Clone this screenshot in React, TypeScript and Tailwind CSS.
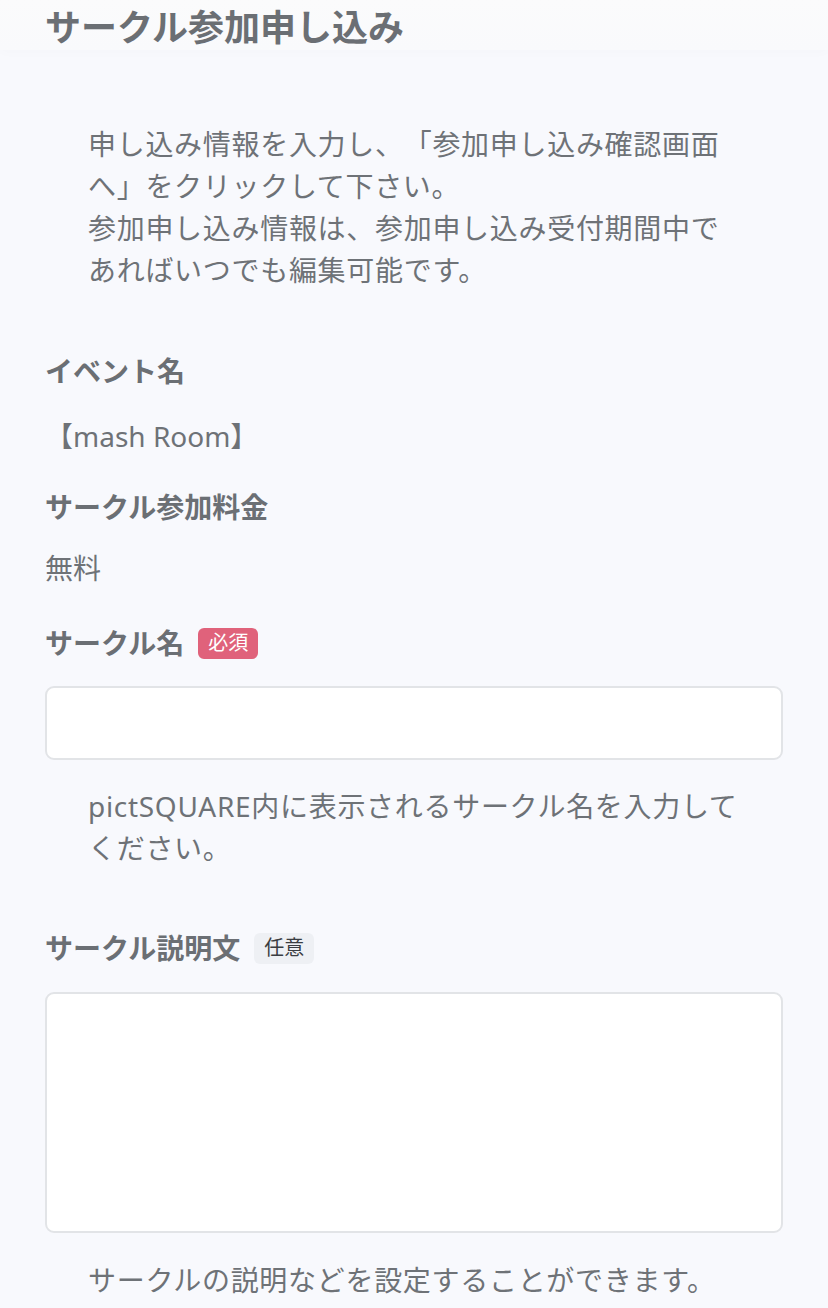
import React from 'react';

const Label = ({ children, badge }: { children: React.ReactNode; badge?: 'required' | 'optional' }) => (
  <div className="flex items-center gap-[14px]">
    <span className="text-[28px] font-bold leading-[42px] text-[#6b6f74]">{children}</span>
    {badge === 'required' && (
      <span className="flex h-[31px] items-center rounded-[6px] bg-[#e0627b] px-[10px] text-[20px] leading-none text-white">
        必須
      </span>
    )}
    {badge === 'optional' && (
      <span className="flex h-[31px] items-center rounded-[6px] bg-[#eef0f4] px-[10px] text-[20px] leading-none text-[#3a3d42]">
        任意
      </span>
    )}
  </div>
);

const Help = ({ children, className = '' }: { children: React.ReactNode; className?: string }) => (
  <p className={`ml-[43px] w-[652px] text-[28px] leading-[42px] tracking-[0.7px] text-[#6e7277] ${className}`}>
    {children}
  </p>
);

export default function App() {
  return (
    <div className="min-h-[1308px] bg-[#f8f9fd] font-[family-name:'Noto_Sans','Noto_Sans_CJK_JP',sans-serif] [text-spacing-trim:space-all]">
      {/* header */}
      <div className="h-[50px] bg-gradient-to-b from-[#fbfbfc] to-[#f9fafc] px-[45px] pt-[6px] shadow-[0_3px_10px_rgba(0,0,0,0.015)]">
        <h1 className="text-[36px] font-bold leading-[44px] text-[#6b6f74]">サークル参加申し込み</h1>
      </div>

      <div className="px-[45px] pb-10">
        <Help className="mt-[73px]">
          申し込み情報を入力し、「参加申し込み確認画面へ」をクリックして下さい。
          <br />
          参加申し込み情報は、参加申し込み受付期間中であればいつでも編集可能です。
        </Help>

        <div className="mt-[59px]">
          <Label>イベント名</Label>
        </div>
        <p className="mt-[23px] text-[28px] leading-[42px] text-[#6e7277]">【mash Room】</p>

        <div className="mt-[29px]">
          <Label>サークル参加料金</Label>
        </div>
        <p className="mt-[19px] text-[28px] leading-[42px] text-[#6e7277]">無料</p>

        <div className="mt-[33px]">
          <Label badge="required">サークル名</Label>
        </div>
        <input
          type="text"
          className="mt-[22px] block h-[74px] w-full rounded-[9px] border-2 border-[#e2e4e7] bg-white px-4 text-[28px] outline-none"
        />
        <Help className="mt-[25px]">pictSQUARE内に表示されるサークル名を入力してください。</Help>

        <div className="mt-[58px]">
          <Label badge="optional">サークル説明文</Label>
        </div>
        <textarea className="mt-[23px] block h-[241px] w-full resize-none rounded-[9px] border-2 border-[#e2e4e7] bg-white p-4 text-[28px] outline-none" />
        <Help className="mt-[26px]">サークルの説明などを設定することができます。</Help>
      </div>
    </div>
  );
}
